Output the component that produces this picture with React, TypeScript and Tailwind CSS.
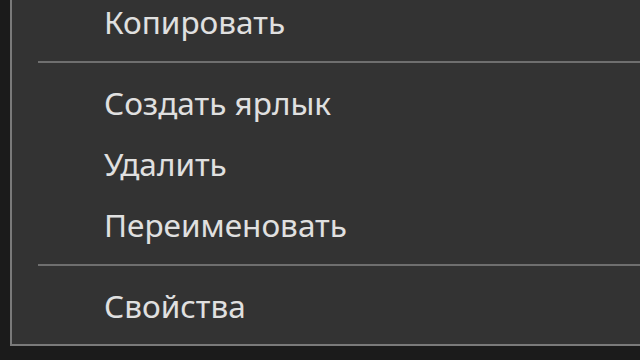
import React from "react";

const Item = ({ label }: { label: string }) => (
  <div className="h-[61px] flex items-center pl-[92px] text-[31.5px] text-[#e0e0e0] leading-none">
    <span>{label}</span>
  </div>
);

const Sep = () => (
  <div className="h-[20px] flex items-center pl-[26px]">
    <div className="h-[2px] w-full bg-[#6f6f6f]" />
  </div>
);

export default function App() {
  return (
    <div
      className="w-[640px] h-[360px] bg-[#1b1b1b] overflow-hidden"
      style={{ fontFamily: '"Noto Sans", "Open Sans", sans-serif' }}
    >
      <div className="ml-[10px] -mt-[9px] w-[640px] bg-[#333333] border-l-2 border-b-2 border-[#7a7a7a] pb-[8px]">
        <Item label="Копировать" />
        <Sep />
        <Item label="Создать ярлык" />
        <Item label="Удалить" />
        <Item label="Переименовать" />
        <Sep />
        <Item label="Свойства" />
      </div>
    </div>
  );
}
